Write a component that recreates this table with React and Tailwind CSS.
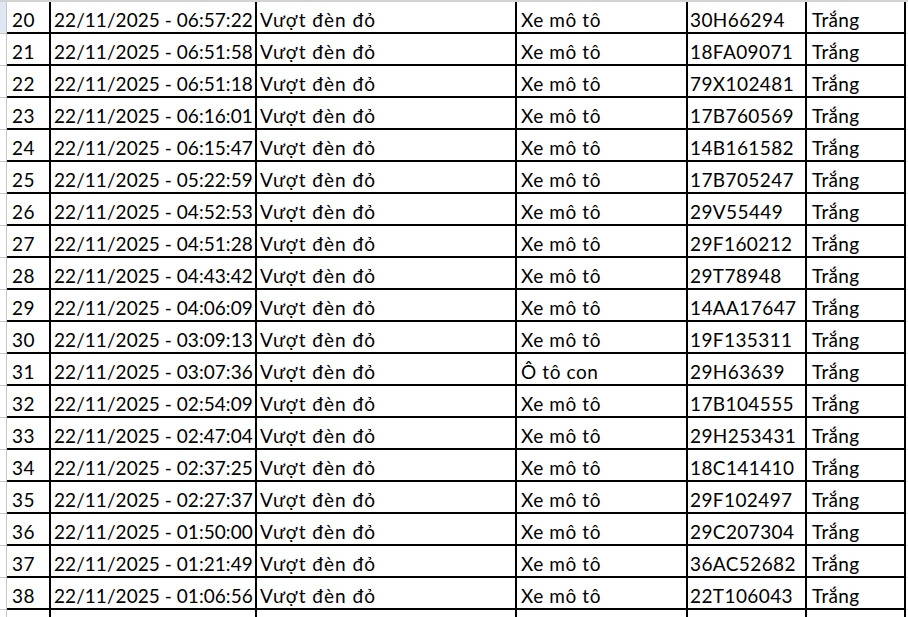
import React from "react";

const rows = [
  ["20", "06:57:22", "Xe mô tô", "30H66294"],
  ["21", "06:51:58", "Xe mô tô", "18FA09071"],
  ["22", "06:51:18", "Xe mô tô", "79X102481"],
  ["23", "06:16:01", "Xe mô tô", "17B760569"],
  ["24", "06:15:47", "Xe mô tô", "14B161582"],
  ["25", "05:22:59", "Xe mô tô", "17B705247"],
  ["26", "04:52:53", "Xe mô tô", "29V55449"],
  ["27", "04:51:28", "Xe mô tô", "29F160212"],
  ["28", "04:43:42", "Xe mô tô", "29T78948"],
  ["29", "04:06:09", "Xe mô tô", "14AA17647"],
  ["30", "03:09:13", "Xe mô tô", "19F135311"],
  ["31", "03:07:36", "Ô tô con", "29H63639"],
  ["32", "02:54:09", "Xe mô tô", "17B104555"],
  ["33", "02:47:04", "Xe mô tô", "29H253431"],
  ["34", "02:37:25", "Xe mô tô", "18C141410"],
  ["35", "02:27:37", "Xe mô tô", "29F102497"],
  ["36", "01:50:00", "Xe mô tô", "29C207304"],
  ["37", "01:21:49", "Xe mô tô", "36AC52682"],
  ["38", "01:06:56", "Xe mô tô", "22T106043"],
];

const cell = "flex items-end shrink-0 border-r-2 border-black whitespace-nowrap overflow-hidden";

const Row = ({ r, first }) => {
  return (
    <div className="flex h-[32px] shrink-0">
      <div
        className={
          "w-[7px] shrink-0 border-r border-b border-[#c8c8c8] " +
          (first ? "bg-[#dfe7f3]" : "bg-white")
        }
      />
      <div className="flex border-b-2 border-black">
        <div className={cell + " w-[44px] pl-[5px] tracking-[0.5px]"}>{r ? r[0] : ""}</div>
        <div className={cell + " w-[206px] pl-[3px] tracking-[0.05px]"}>
          {r ? "22/11/2025 - " + r[1] : ""}
        </div>
        <div className={cell + " w-[260px] pl-[3px] tracking-[1px]"}>{r ? "Vượt đèn đỏ" : ""}</div>
        <div className={cell + " w-[171px] pl-[4px] tracking-[0.6px]"}>{r ? r[2] : ""}</div>
        <div className={cell + " w-[119px] pl-[2px] tracking-[0.4px]"}>{r ? r[3] : ""}</div>
        <div className={cell + " w-[99px] pl-[5px] tracking-[0.3px]"}>{r ? "Trắng" : ""}</div>
      </div>
      <div className="flex-1 border-b border-[#dadada]" />
    </div>
  );
};

const App = () => {
  return (
    <div
      className="w-[908px] h-[617px] overflow-hidden bg-white text-black text-[19px] leading-[1.2] flex flex-col"
      style={{ fontFamily: "Lato, 'Noto Sans', sans-serif" }}
    >
      <div className="h-[2px] shrink-0 bg-[#d2d2d2]" />
      {rows.map((r, i) => (
        <Row key={r[0]} r={r} first={i === 0} />
      ))}
      <Row r={null} />
    </div>
  );
};

export default App;
